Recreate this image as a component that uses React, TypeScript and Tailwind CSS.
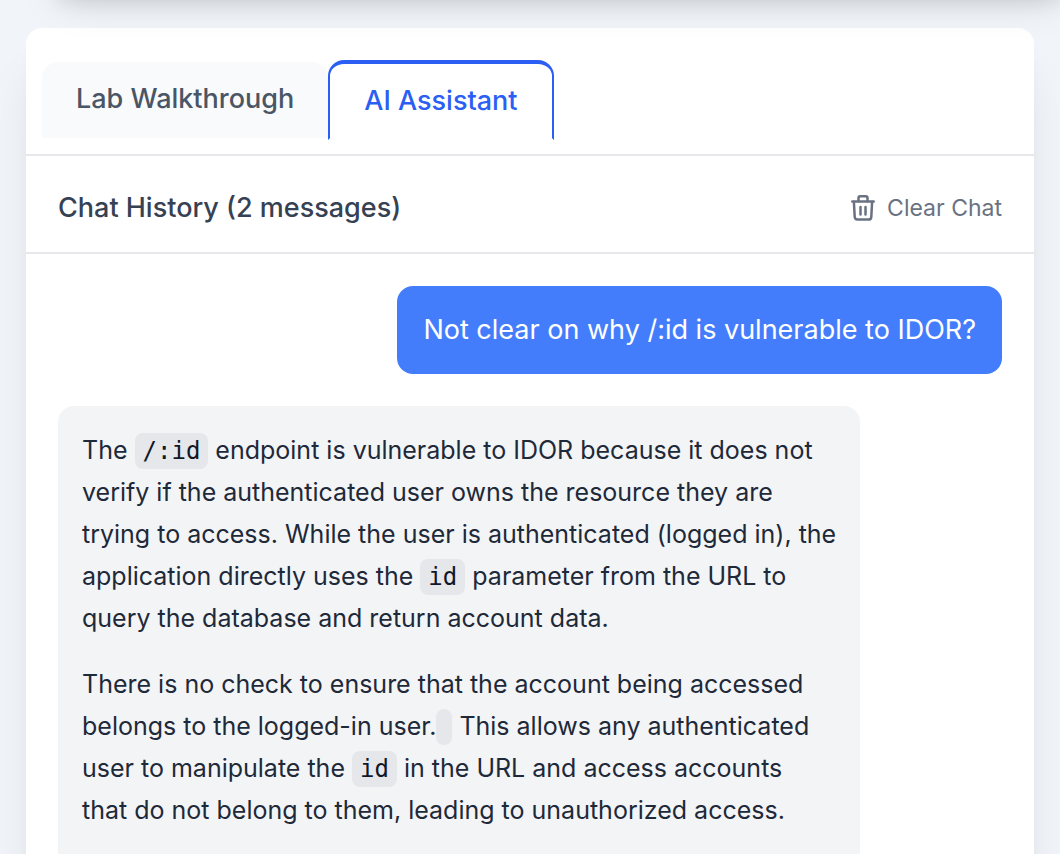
import React, { useState } from 'react'

function TrashIcon() {
  return (
    <svg
      viewBox="0 0 24 26"
      className="h-[26px] w-6"
      fill="none"
      stroke="currentColor"
      strokeWidth="2.5"
      strokeLinecap="round"
      strokeLinejoin="round"
      aria-hidden="true"
    >
      <path d="M1.3 6.4h21.4" />
      <path d="M7.5 6V3c0-1 .7-1.700 1.700-1.700h5.600c1 0 1.700.7 1.700 1.700v3" />
      <path d="M2.9 7l.8 14.800c.1 1.600 1.200 2.700 2.800 2.700h11c1.600 0 2.700-1.100 2.800-2.700L21.100 7" />
      <path d="M9.500 12v7.500M14.500 12v7.500" />
    </svg>
  )
}

function Code({ children }: { children?: React.ReactNode }) {
  return (
    <code className="rounded-lg bg-gray-200 px-2 py-1 font-['DejaVu_Sans_Mono',monospace] text-2xl text-gray-900">
      {children}
    </code>
  )
}

const tabs = ['Lab Walkthrough', 'AI Assistant']

export default function App() {
  const [active, setActive] = useState('AI Assistant')

  return (
    <div className="h-screen overflow-hidden bg-slate-100 font-['Inter',sans-serif]">
      <div className="relative z-10 -mt-20 ml-[60px] h-20 shadow-[0_0_20px_rgba(0,0,0,0.12),0_0_44px_rgba(0,0,0,0.12)]" />

      <main className="mx-[26px] mt-7 min-h-screen rounded-2xl bg-white shadow-[0_40px_50px_-10px_rgba(0,0,0,0.1),0_16px_20px_-12px_rgba(0,0,0,0.1)]">
        <div role="tablist" className="flex items-start border-b-2 border-gray-200 px-4 pt-8 pb-[14px]">
          {tabs.map((tab) => (
            <button
              key={tab}
              role="tab"
              aria-selected={active === tab}
              onClick={() => setActive(tab)}
              className={
                active === tab
                  ? 'h-20 rounded-t-2xl border-x-2 border-t-4 border-b-2 border-[#2b5ef3] border-b-transparent bg-white px-[34px] text-[27px] font-medium text-[#2b5ef3]'
                  : 'mt-[2px] h-[76px] rounded-t-2xl bg-gray-50 px-[34px] pb-[2px] text-[27px] font-medium text-gray-600'
              }
            >
              {tab}
            </button>
          ))}
        </div>

        <div className="flex items-center justify-between border-b-2 border-gray-200 px-8 pt-8 pb-6">
          <h2 className="text-[27px] leading-10 font-medium text-gray-700">Chat History (2 messages)</h2>
          <button className="flex items-center gap-3 text-[23px] text-gray-500">
            <TrashIcon />
            Clear Chat
          </button>
        </div>

        <div className="flex flex-col gap-8 p-8">
          <div className="self-end rounded-2xl bg-[#447dfc] px-[26px] py-6 text-[27px] leading-10 text-white">
            Not clear on why /:id is vulnerable to IDOR?
          </div>

          <div className="w-full max-w-[85%] space-y-6 self-start rounded-2xl bg-gray-100 px-6 pt-[23px] pb-12 text-[25px] leading-[42px] text-gray-800">
            <p>
              The <Code>/:id</Code> endpoint is vulnerable to IDOR because it does not verify if the
              authenticated user owns the resource they are trying to access. While the user is
              authenticated (logged in), the application directly uses the <Code>id</Code> parameter
              from the URL to query the database and return account data.
            </p>
            <p>
              There is no check to ensure that the account being accessed belongs to the logged-in
              user.
              <Code /> This allows any authenticated user to manipulate the <Code>id</Code> in the
              URL and access accounts that&nbsp;do not belong to them, leading to unauthorized access.
            </p>
          </div>
        </div>
      </main>
    </div>
  )
}
